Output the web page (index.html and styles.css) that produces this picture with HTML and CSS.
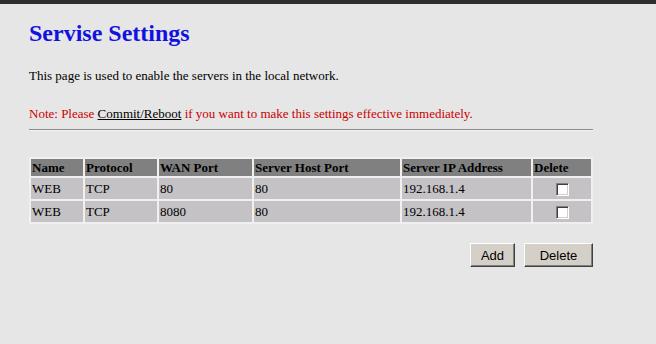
FILE: index.html
```html
<!DOCTYPE html>
<html lang="en">

<head>
    <meta charset="UTF-8">
    <title>Servise Settings</title>
    <link rel="stylesheet" href="styles.css">
</head>

<body>
    <div class="topbar"></div>

    <div class="page">
        <h1 class="title">Servise Settings</h1>

        <p class="intro">This page is used to enable the servers in the local network.</p>

        <p class="note">Note: Please <a href="#" class="link">Commit/Reboot</a> if you want to make this settings effective immediately.</p>

        <hr class="line">

        <form class="service_form">
            <table class="service_table">
                <tr class="head">
                    <td class="c_name">Name</td>
                    <td class="c_proto">Protocol</td>
                    <td class="c_wan">WAN Port</td>
                    <td class="c_host">Server Host Port</td>
                    <td class="c_ip">Server IP Address</td>
                    <td class="c_del">Delete</td>
                </tr>
                <tr>
                    <td>WEB</td>
                    <td>TCP</td>
                    <td>80</td>
                    <td>80</td>
                    <td>192.168.1.4</td>
                    <td class="center"><input type="checkbox" class="check"></td>
                </tr>
                <tr>
                    <td>WEB</td>
                    <td>TCP</td>
                    <td>8080</td>
                    <td>80</td>
                    <td>192.168.1.4</td>
                    <td class="center"><input type="checkbox" class="check"></td>
                </tr>
            </table>

            <div class="buttons">
                <button type="button" class="btn btn_add">Add</button>
                <button type="button" class="btn btn_del">Delete</button>
            </div>
        </form>
    </div>
</body>

</html>
```

FILE: styles.css
```css
body {
    margin: 0;
    background-color: #e6e6e6;
    font-family: "Liberation Serif", "Times New Roman", serif;
    font-size: 13px;
    color: #000;
}

.topbar {
    height: 4px;
    background-color: #2e2e2e;
}

.page {
    width: 564px;
    padding: 15px 0 0 29px;
}

.title {
    margin: 0;
    font-size: 24px;
    font-weight: bold;
    color: #1212e0;
    line-height: 28px;
}

.intro {
    margin: 21px 0 0 0;
    line-height: 16px;
}

.note {
    margin: 22px 0 0 0;
    line-height: 16px;
    color: #cc0000;
}

.link {
    color: #000;
    text-decoration: underline;
}

.line {
    margin: 7px 0 0 0;
    border: none;
    border-top: 1px solid #8a8a8a;
    border-bottom: 1px solid #f2f2f2;
    height: 0;
}

.service_table {
    margin: 26px 0 0 0;
    border-collapse: separate;
    border-spacing: 2px;
    table-layout: fixed;
    background-color: #f0f0f0;
    width: 564px;
}

.service_table td {
    padding: 0 1px;
    height: 21px;
    background-color: #c4c2c4;
    font-size: 13px;
    overflow: hidden;
    white-space: nowrap;
}

.service_table .head td {
    height: 17px;
    background-color: #808080;
    font-weight: bold;
}

.c_name {
    width: 50px;
}

.c_proto {
    width: 70px;
}

.c_wan {
    width: 91px;
}

.c_host {
    width: 144px;
}

.c_ip {
    width: 127px;
}

.c_del {
    width: 56px;
}

.center {
    text-align: center;
}

.check {
    appearance: none;
    -webkit-appearance: none;
    width: 13px;
    height: 13px;
    margin: 2px 0 0 0;
    vertical-align: top;
    background-color: #fff;
    border: 1px solid;
    border-color: #808080 #fff #fff #808080;
    box-shadow: inset 1px 1px 0 #404040, inset -1px -1px 0 #d4d0c8;
}

.buttons {
    display: flex;
    justify-content: flex-end;
    gap: 9px;
    margin: 19px 0 0 0;
    width: 564px;
}

.btn {
    height: 24px;
    padding: 0;
    background-color: #d4d0c8;
    font-family: "Liberation Sans", Arial, sans-serif;
    font-size: 13px;
    color: #000;
    border: 1px solid;
    border-color: #fff #404040 #404040 #fff;
    box-shadow: inset -1px -1px 0 #808080;
}

.btn_add {
    width: 45px;
}

.btn_del {
    width: 69px;
}
```
